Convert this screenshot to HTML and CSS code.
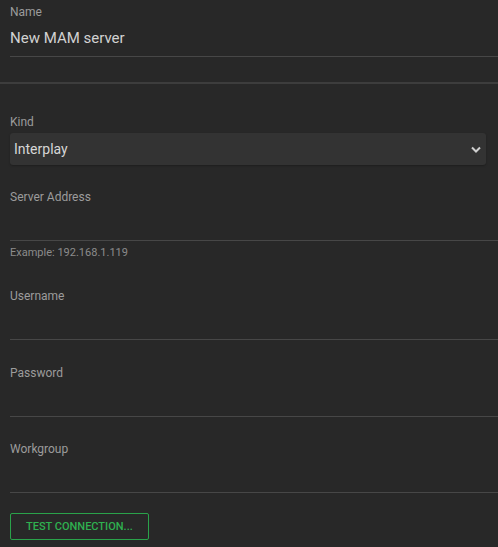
FILE: index.html
```html
<!DOCTYPE html>
<html>
<head>
<meta charset="utf-8">
<link rel="stylesheet" href="styles.css">
</head>
<body>
<div class="form">
  <div class="field name-field">
    <div class="label">Name</div>
    <div class="input big">New MAM server</div>
  </div>
  <div class="sep"></div>
  <div class="field kind-field">
    <div class="label">Kind</div>
    <div class="select">
      <span>Interplay</span>
      <svg class="chev" width="10" height="7" viewBox="0 0 10 7"><polyline points="1,1.5 5,5.5 9,1.5" fill="none" stroke="#d0d0d0" stroke-width="2"/></svg>
    </div>
  </div>
  <div class="field">
    <div class="label">Server Address</div>
    <div class="input"></div>
    <div class="hint">Example: 192.168.1.119</div>
  </div>
  <div class="field user-field">
    <div class="label">Username</div>
    <div class="input"></div>
  </div>
  <div class="field">
    <div class="label">Password</div>
    <div class="input"></div>
  </div>
  <div class="field">
    <div class="label">Workgroup</div>
    <div class="input"></div>
  </div>
  <div class="actions">
    <button class="btn">TEST CONNECTION...</button>
  </div>
</div>
</body>
</html>
```
FILE: styles.css
```css
html, body {
  margin: 0;
  padding: 0;
  background: #282828;
  font-family: Roboto, "Liberation Sans", sans-serif;
}
.form {
  display: flex;
  flex-direction: column;
  padding-top: 4px;
}
.field {
  padding-left: 10px;
  margin-bottom: 24px;
}
.user-field {
  margin-bottom: 25px;
}
.label {
  font-size: 12px;
  line-height: 16px;
  color: #9c9c9c;
}
.input {
  height: 35px;
  border-bottom: 1px solid #474747;
  box-sizing: content-box;
  color: #d2d2d2;
  font-size: 15px;
  display: flex;
  align-items: center;
}
.input.big {
  height: 36px;
}
.name-field {
  margin-bottom: 25px;
}
.sep {
  height: 2px;
  background: #3d3d3d;
  margin-bottom: 30px;
}
.kind-field .label {
  margin-bottom: 3px;
}
.select {
  height: 32px;
  margin-right: 12px;
  background: #333333;
  border-radius: 3px;
  display: flex;
  align-items: center;
  justify-content: space-between;
  padding: 0 4px 0 4px;
  color: #d6d6d6;
  font-size: 14px;
  box-shadow: 0 1px 2px rgba(0,0,0,0.25);
}
.chev {
  margin-right: 1px;
}
.hint {
  font-size: 11px;
  line-height: 14px;
  color: #8c8c8c;
  padding-top: 5px;
  padding-bottom: 4px;
}
.actions {
  padding-left: 10px;
  margin-top: -4px;
}
.btn {
  height: 27px;
  padding: 0 15px;
  background: transparent;
  border: 1px solid #2aa24a;
  border-radius: 2px;
  color: #2fb150;
  font-family: Roboto, "Liberation Sans", sans-serif;
  font-size: 11px;
  font-weight: 500;
  letter-spacing: 0;
}
```
